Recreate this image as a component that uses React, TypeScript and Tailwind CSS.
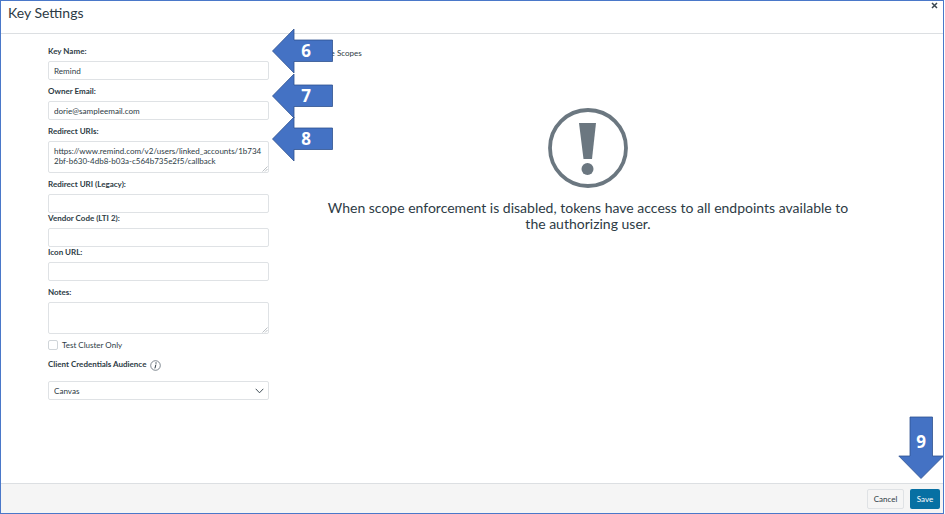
import { ReactNode } from 'react';

const inputClass =
    'block w-[221px] h-[19px] rounded-[2px] border border-[#dfe2e5] bg-white px-[5px] text-[8.1px] text-[#2d3b45] outline-none';
const areaClass =
    'block w-[221px] h-[32px] resize-none rounded-[2px] border border-[#dfe2e5] bg-white px-[5px] py-[5px] text-[8px] leading-[9.5px] text-[#2d3b45] outline-none';

function Field({ label, gap, children }: { label: string; gap: string; children: ReactNode }) {
    return (
        <div className={gap}>
            <label className="block h-[10px] mb-[5px] text-[8px] leading-[10px] font-bold text-[#2d3b45]">{label}</label>
            {children}
        </div>
    );
}

function TextArea({ value }: { value?: string }) {
    return (
        <div className="relative w-[221px]">
            <textarea className={areaClass} readOnly value={value ?? ''} />
            <svg width="6" height="6" viewBox="0 0 6 6" className="absolute right-[1px] bottom-[1px]">
                <path d="M0.5 5.5 L5.5 0.5 M3 5.5 L5.5 3" stroke="#a9b0b6" strokeWidth="0.8" />
            </svg>
        </div>
    );
}

function ArrowLeft({ n, top }: { n: number; top: string }) {
    return (
        <div className={`absolute left-[270px] ${top} h-[46px] w-[63px]`}>
            <svg width="63" height="46" viewBox="0 0 63 46" className="absolute inset-0">
                <polygon
                    points="1.5,23 23,1 23,12 61.5,12 61.5,33.5 23,33.5 23,45"
                    fill="#4472c4"
                    stroke="#2f528f"
                    strokeWidth="0.8"
                />
            </svg>
            <span className="absolute left-[22px] top-[11px] w-[26px] text-center text-[17px] leading-[23px] font-bold text-white font-['Open_Sans',sans-serif]">
                {n}
            </span>
        </div>
    );
}

export default function App() {
    return (
        <div className="relative w-[944px] h-[514px] flex flex-col border border-[#4a78c9] bg-white font-['Lato',sans-serif] overflow-hidden">
            <div className="relative h-[33px] shrink-0 border-b border-[#dcdfe2] pl-[7px]">
                <h1 className="text-[14px] leading-[24px] text-[#2d3b45]">Key Settings</h1>
                <svg width="7" height="7" viewBox="0 0 7 7" className="absolute right-[5px] top-[1px]">
                    <path d="M1 1 L6 6 M6 1 L1 6" stroke="#3b4750" strokeWidth="1.5" />
                </svg>
            </div>

            <div className="flex-1 flex">
                <div className="w-[292px] shrink-0 pl-[47px] pt-[12px]">
                    <Field label="Key Name:" gap="">
                        <input className={inputClass} readOnly value="Remind" />
                    </Field>
                    <Field label="Owner Email:" gap="mt-[6px]">
                        <input className={inputClass} readOnly value="dorie@sampleemail.com" />
                    </Field>
                    <Field label="Redirect URIs:" gap="mt-[6px]">
                        <TextArea value="https://www.remind.com/v2/users/linked_accounts/1b7342bf-b630-4db8-b03a-c564b735e2f5/callback" />
                    </Field>
                    <Field label="Redirect URI (Legacy):" gap="mt-[6px]">
                        <input className={inputClass} readOnly />
                    </Field>
                    <Field label="Vendor Code (LTI 2):" gap="">
                        <input className={inputClass} readOnly />
                    </Field>
                    <Field label="Icon URL:" gap="">
                        <input className={inputClass} readOnly />
                    </Field>
                    <Field label="Notes:" gap="mt-[6px]">
                        <TextArea />
                    </Field>
                    <div className="mt-[6px] flex items-center gap-[4px] h-[10px]">
                        <span className="w-[10px] h-[10px] rounded-[2px] border border-[#d0d5d9] bg-white" />
                        <span className="text-[8px] text-[#2d3b45]">Test Cluster Only</span>
                    </div>
                    <div className="mt-[9px] flex items-center h-[10px]">
                        <span className="text-[8px] font-bold text-[#2d3b45]">Client Credentials Audience</span>
                        <svg width="11" height="11" viewBox="0 0 11 11" className="ml-[4px] mt-[2px]">
                            <circle cx="5.5" cy="5.5" r="4.8" fill="none" stroke="#4b5863" strokeWidth="0.7" />
                            <circle cx="6" cy="3" r="0.7" fill="#2d3b45" />
                            <path d="M5.9 4.6 L4.9 8.4" stroke="#2d3b45" strokeWidth="1" />
                        </svg>
                    </div>
                    <div className="relative mt-[12px] w-[221px]">
                        <select className="block w-full h-[19px] appearance-none rounded-[2px] border border-[#dfe2e5] bg-white px-[5px] pt-[1px] text-[8.1px] text-[#2d3b45] outline-none">
                            <option>Canvas</option>
                        </select>
                        <svg width="9" height="6" viewBox="0 0 9 6" className="absolute right-[5px] top-[7px]">
                            <path d="M0.7 0.8 L4.5 4.8 L8.3 0.8" fill="none" stroke="#2d3b45" strokeWidth="0.9" />
                        </svg>
                    </div>
                </div>

                <div className="w-[590px] shrink-0 flex flex-col">
                    <div className="pl-[15px] mt-[14px] h-[10px] text-[8px] leading-[10px] text-[#2d3b45]">Enforce Scopes</div>
                    <svg width="80" height="80" viewBox="0 0 80 80" className="self-center mt-[50px]">
                        <circle cx="40" cy="40" r="38" fill="none" stroke="#6b7780" strokeWidth="3.8" />
                        <polygon points="31,15 48,15 44,51 35.5,51" fill="#6b7780" />
                        <circle cx="39.5" cy="61" r="6" fill="#6b7780" />
                    </svg>
                    <p className="self-center w-[525px] mt-[12px] text-center text-[14px] leading-[16px] text-[#2d3b45]">
                        When scope enforcement is disabled, tokens have access to all endpoints available to the authorizing user.
                    </p>
                </div>
            </div>

            <div className="h-[30px] shrink-0 flex items-start justify-end gap-[6px] border-t border-[#dcdfe2] bg-[#f5f5f5] pr-[3px] pt-[5px]">
                <button className="w-[37px] h-[20px] rounded-[2px] border border-[#dfe2e5] bg-[#f5f5f5] text-[8px] text-[#2d3b45]">Cancel</button>
                <button className="w-[30px] h-[20px] rounded-[2px] bg-[#0770a3] text-[8px] text-white">Save</button>
            </div>

            <ArrowLeft n={6} top="top-[27px]" />
            <ArrowLeft n={7} top="top-[72px]" />
            <ArrowLeft n={8} top="top-[115px]" />

            <div className="absolute left-[897px] top-[415px] h-[64px] w-[46px]">
                <svg width="46" height="64" viewBox="0 0 46 64" className="absolute inset-0">
                    <polygon
                        points="12,1 34.5,1 34.5,40 45.5,40 23,62.5 0.8,40 12,40"
                        fill="#4472c4"
                        stroke="#2f528f"
                        strokeWidth="0.8"
                    />
                </svg>
                <span className="absolute left-[10px] top-[14px] w-[26px] text-center text-[17px] leading-[23px] font-bold text-white font-['Open_Sans',sans-serif]">
                    9
                </span>
            </div>
        </div>
    );
}
